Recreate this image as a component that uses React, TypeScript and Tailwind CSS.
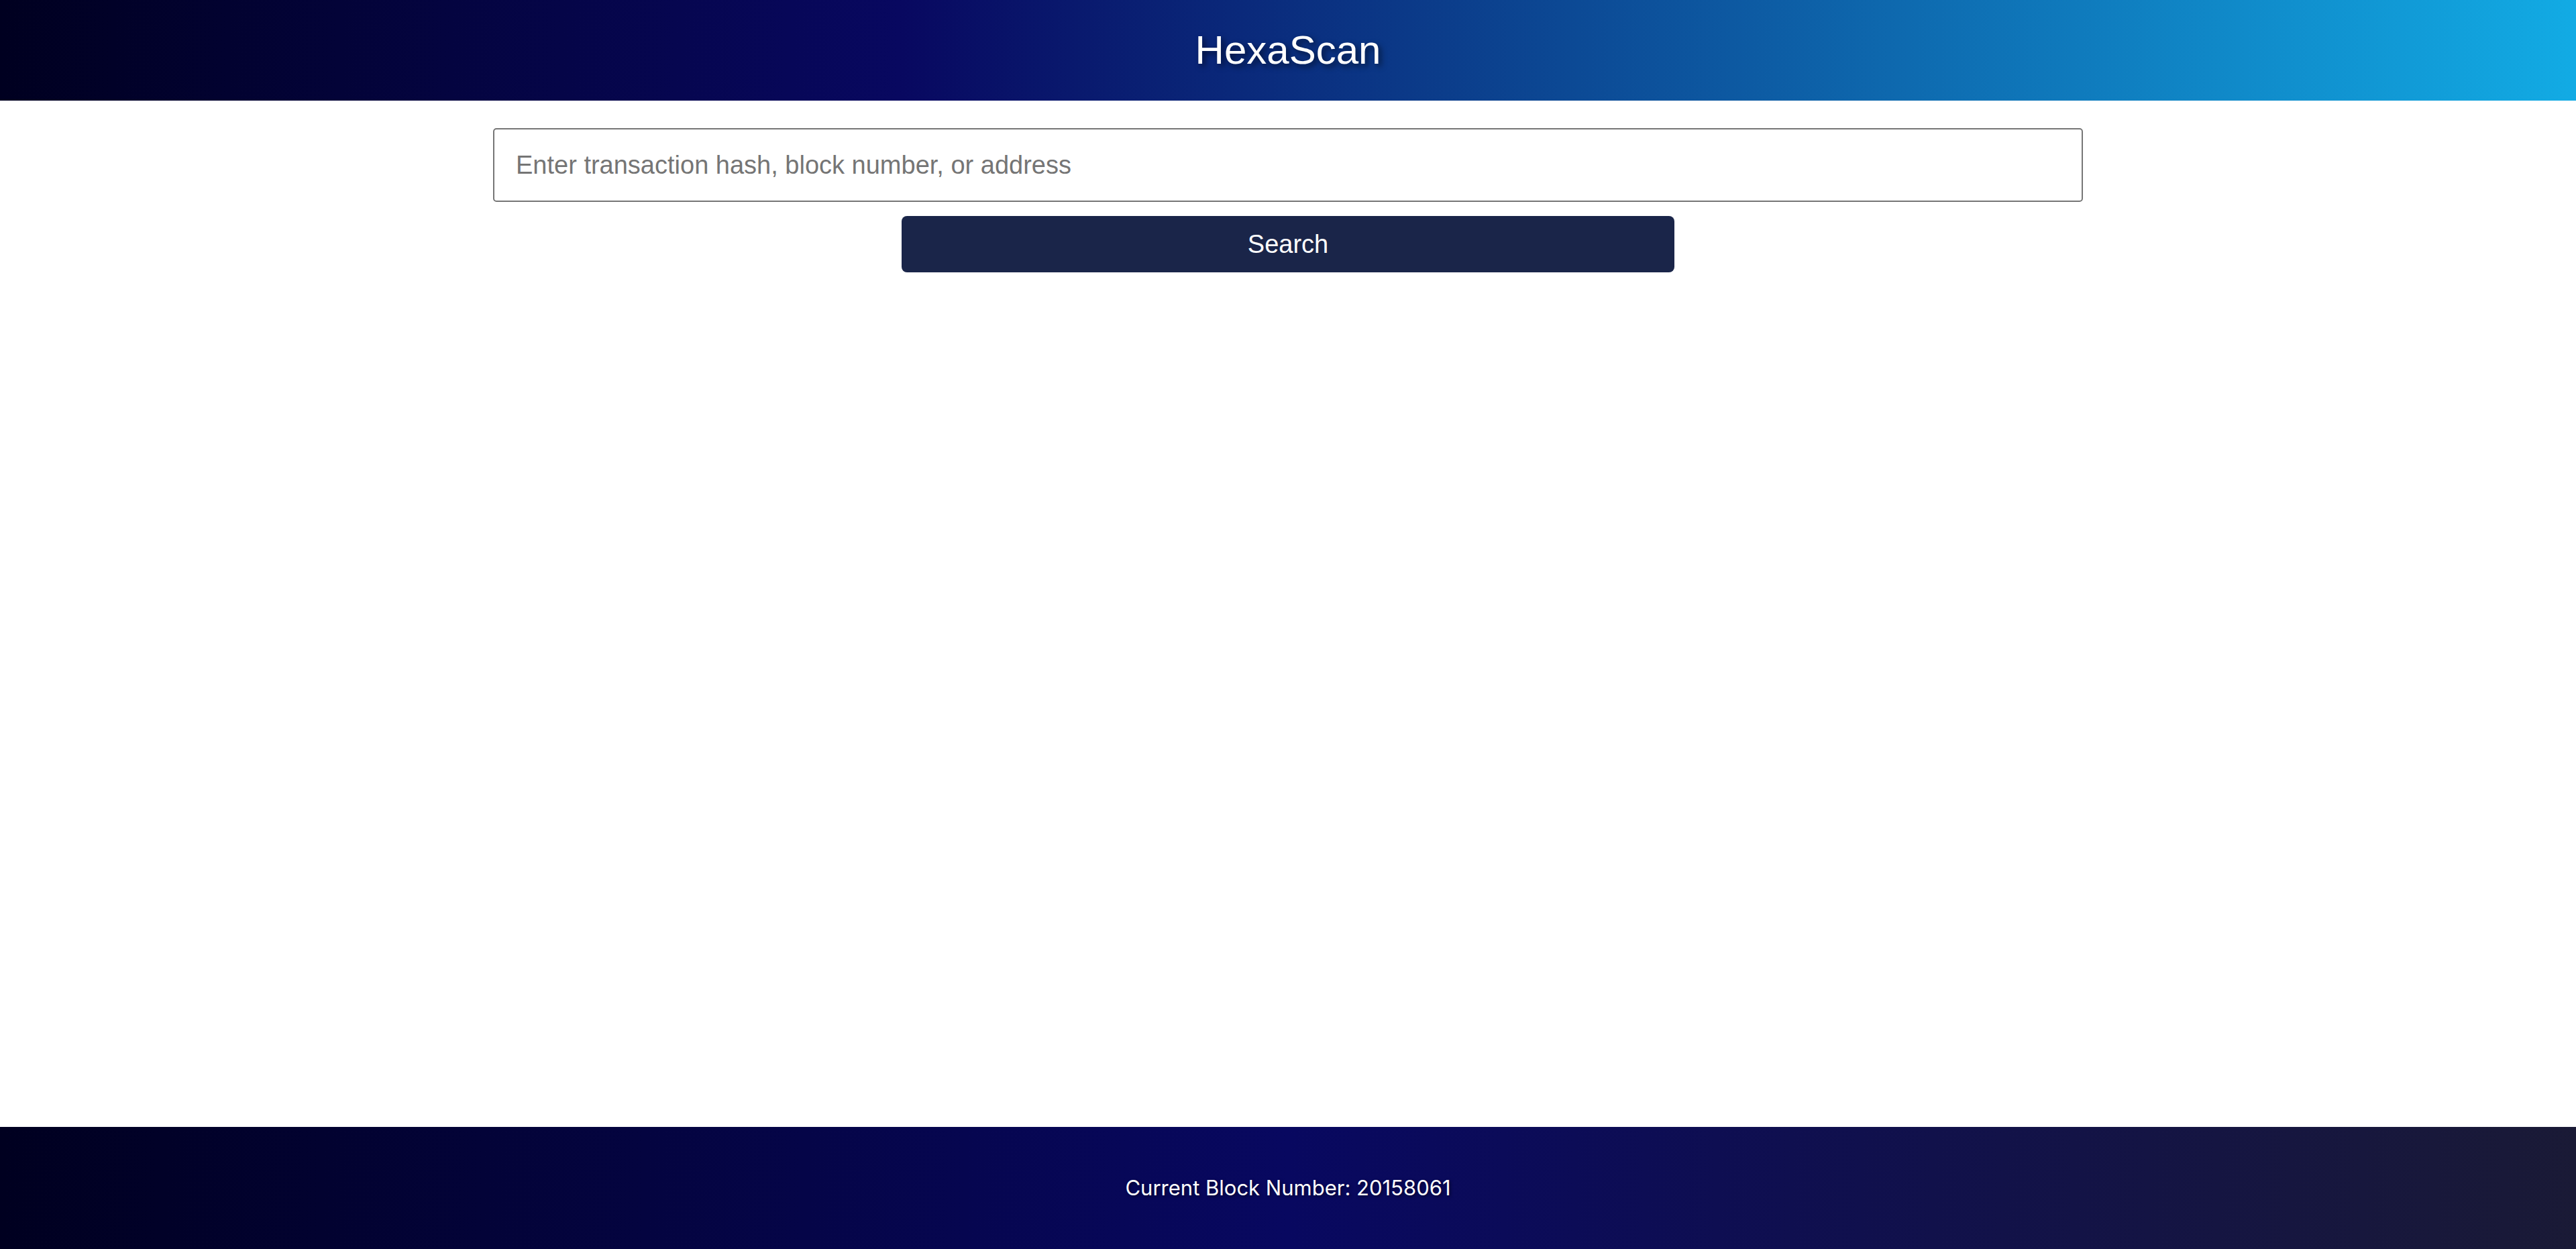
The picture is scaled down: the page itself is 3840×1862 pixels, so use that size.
import { useState } from "react";

const App = () => {
  const [query, setQuery] = useState("");
  const blockNumber = 20158061;

  return (
    <div className="min-h-screen flex flex-col bg-white font-['Liberation_Sans',Arial,sans-serif]">
      {/* Header */}
      <header className="h-[150px] flex items-center justify-center bg-linear-to-r/srgb from-[#000020] from-0% via-[#080860] via-35% to-[#12abe4] to-100%">
        <h1 className="text-[60px] leading-none text-white font-normal [text-shadow:4px_4px_8px_rgba(0,0,0,0.55)]">
          HexaScan
        </h1>
      </header>

      {/* Search */}
      <main className="flex-1 flex flex-col items-center pt-[41px]">
        <input
          type="text"
          value={query}
          onChange={(e) => setQuery(e.target.value)}
          placeholder="Enter transaction hash, block number, or address"
          className="w-[2370px] h-[110px] px-[32px] text-[38px] text-black border-2 border-[#767676] rounded-[5px] bg-white placeholder:text-[#757575] focus:outline-none"
        />
        <button
          type="button"
          className="mt-[21px] w-[1152px] h-[84px] bg-[#1a2549] text-white text-[38px] rounded-[8px]"
        >
          Search
        </button>
      </main>

      {/* Footer */}
      <footer className="h-[182px] flex items-center justify-center bg-linear-to-r/srgb from-[#000020] via-[#080860] to-[#1a1a36]">
        <p className="text-[31px] text-white font-['Inter',sans-serif] [text-shadow:2px_2px_4px_rgba(0,0,0,0.5)]">
          Current Block Number: {blockNumber}
        </p>
      </footer>
    </div>
  );
};

export default App;
